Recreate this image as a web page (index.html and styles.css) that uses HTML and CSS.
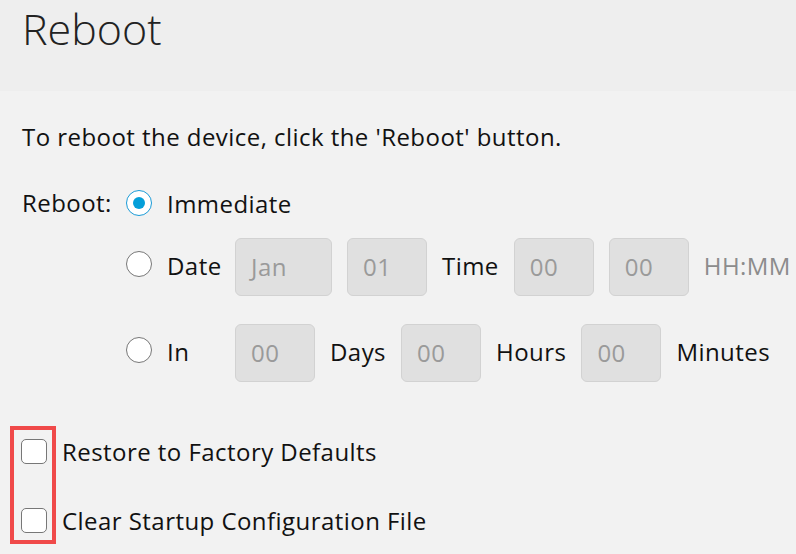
FILE: index.html
```html
<!DOCTYPE html>
<html lang="en">
<head>
  <meta charset="UTF-8" />
  <title>Reboot</title>
  <link rel="stylesheet" href="styles.css">
</head>
<body>

<!-- PAGE TITLE -->
<header class="page-head">
  <h1>Reboot</h1>
</header>

<!-- REBOOT FORM -->
<section class="content">
  <p class="intro">To reboot the device, click the 'Reboot' button.</p>

  <div class="reboot-grid">
    <div class="field-label">Reboot:</div>
    <div class="options">
      <div class="opt-row row-immediate">
        <span class="radio checked"></span>
        <span class="opt-name">Immediate</span>
      </div>
      <div class="opt-row row-date">
        <span class="radio"></span>
        <span class="opt-name w-date">Date</span>
        <span class="box w-mon">Jan</span>
        <span class="box">01</span>
        <span class="txt">Time</span>
        <span class="box">00</span>
        <span class="box">00</span>
        <span class="hint">HH:MM</span>
      </div>
      <div class="opt-row row-in">
        <span class="radio"></span>
        <span class="opt-name w-date">In</span>
        <span class="box">00</span>
        <span class="txt">Days</span>
        <span class="box">00</span>
        <span class="txt">Hours</span>
        <span class="box">00</span>
        <span class="txt">Minutes</span>
      </div>
    </div>
  </div>

  <div class="checks">
    <div class="highlight"></div>
    <label class="check-row"><span class="checkbox"></span>Restore to Factory Defaults</label>
    <label class="check-row"><span class="checkbox"></span>Clear Startup Configuration File</label>
  </div>
</section>

</body>
</html>
```

FILE: styles.css
```css
* {
  box-sizing: border-box;
  margin: 0;
  padding: 0;
}
body {
  font-family: "Open Sans", "Liberation Sans", Arial, sans-serif;
  background-color: #f2f2f2;
  color: #111;
  font-size: 24px;
  letter-spacing: 0.45px;
}

/* TITLE BAR */
.page-head {
  background-color: #eeeeee;
  height: 91px;
  padding: 4px 22px 0;
}
.page-head h1 {
  font-size: 43px;
  font-weight: 300;
  line-height: 50px;
  letter-spacing: 0;
  color: #222;
}

/* CONTENT */
.content {
  padding: 26px 0 0 22px;
}
.intro {
  line-height: 40px;
  margin-bottom: 31px;
}

.reboot-grid {
  display: flex;
}
.field-label {
  width: 104px;
  line-height: 30px;
}
.options {
  display: flex;
  flex-direction: column;
}
.opt-row {
  display: flex;
  align-items: center;
  gap: 15px;
  height: 58px;
}
.row-immediate {
  height: 30px;
}
.row-date {
  margin-top: 20px;
}
.row-in {
  margin-top: 28px;
}
.row-date .opt-name,
.row-in .opt-name,
.txt,
.hint {
  padding-bottom: 4px;
}
.row-date .radio,
.row-in .radio {
  margin-bottom: 6px;
}
.radio {
  flex: none;
  width: 26px;
  height: 26px;
  border-radius: 50%;
  border: 1px solid #777;
  background: #fff;
  display: flex;
  align-items: center;
  justify-content: center;
}
.radio.checked {
  border: 1.5px solid #1a9bd7;
}
.radio.checked::after {
  content: "";
  width: 12px;
  height: 12px;
  border-radius: 50%;
  background: #049fd9;
}
.w-date {
  width: 53px;
}
.box {
  flex: none;
  width: 80px;
  height: 58px;
  background: #e0e0e0;
  border: 1px solid #d2d2d2;
  border-radius: 6px;
  color: #9a9a9a;
  padding-left: 15px;
  line-height: 56px;
}
.box.w-mon {
  width: 97px;
}
.hint {
  color: #8c8c8c;
}

/* CHECKBOXES */
.checks {
  position: relative;
  margin-top: 49px;
}
.highlight {
  position: absolute;
  left: -12px;
  top: -5px;
  width: 46px;
  height: 118px;
  border: 4px solid #f04a4a;
}
.check-row {
  display: flex;
  align-items: center;
  height: 40px;
  margin-bottom: 29px;
}
.checkbox {
  flex: none;
  width: 26px;
  height: 25px;
  border: 1px solid #777;
  border-radius: 5px;
  background: #fff;
  margin-left: -1px;
  margin-right: 15px;
}
```
